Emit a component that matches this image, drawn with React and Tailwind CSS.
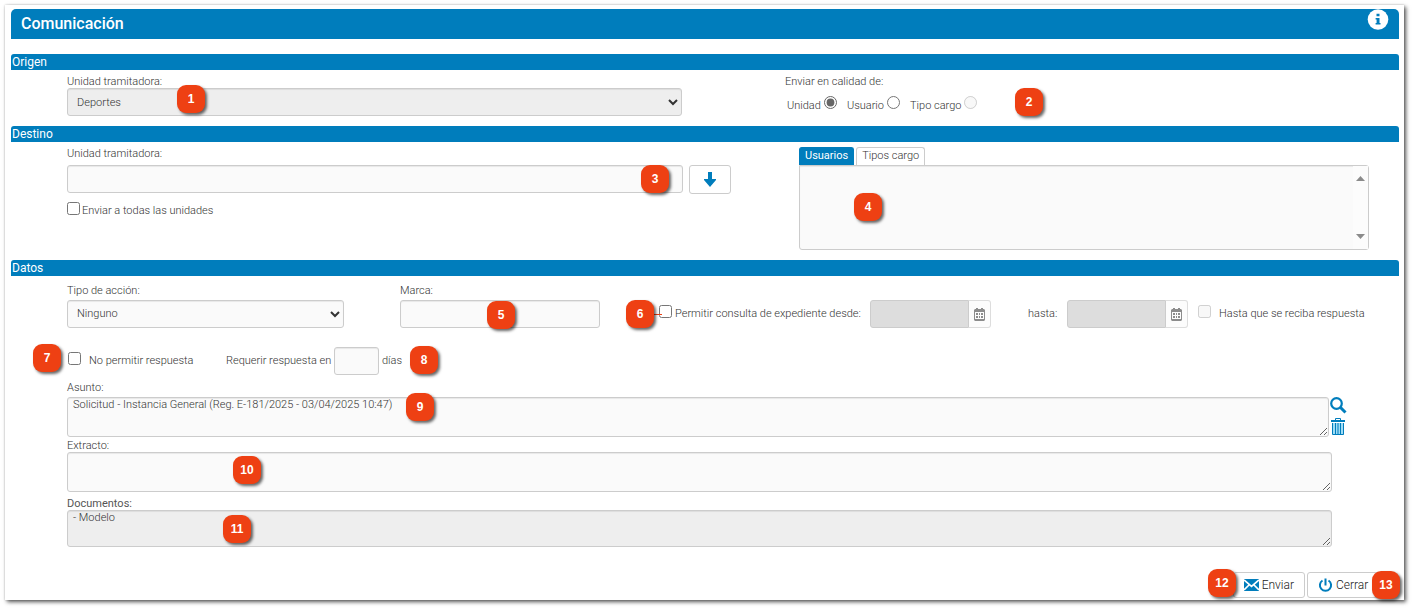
import React, { useState } from 'react';

const fieldBase = 'block h-7 rounded-[3px] border border-[#ccc] shadow-[inset_0_1px_1px_rgba(0,0,0,0.075)] focus:outline-none focus:border-[#007dbc]';
const areaBase = 'block w-full resize rounded-[3px] border border-[#ccc] px-[5px] py-0 leading-[14px] shadow-[inset_0_1px_1px_rgba(0,0,0,0.075)] focus:outline-none focus:border-[#007dbc]';

function Badge({ number, className }) {
  return (
    <span
      className={`absolute z-10 flex h-7 w-7 items-center justify-center rounded-[9px] bg-[#ee4013] font-['Liberation_Sans',sans-serif] text-[12px] font-bold text-white shadow-[2px_2px_3px_rgba(0,0,0,0.6)] ${className}`}
    >
      {number}
    </span>
  );
}

function SectionTitle({ children }) {
  return (
    <h2 className="h-4 rounded-t-[3px] bg-[#007dbc] px-px text-[12px] leading-4 font-normal text-white">
      {children}
    </h2>
  );
}

function CalendarIcon() {
  return (
    <svg width="11" height="13" viewBox="0 0 11 13" fill="#8c8c8c">
      <path d="M2 0h2v1h3V0h2v1h1l1 1v10l-1 1H1l-1-1V2l1-1h1zM1 4v7h9V4z" fillRule="evenodd" />
      <path d="M2 5h2v2H2zM5 5h1v2H5zM7 5h2v2H7zM2 8h2v2H2zM5 8h1v2H5zM7 8h2v2H7z" />
    </svg>
  );
}

function DateField({ id, label }) {
  return (
    <div className="flex">
      <input
        id={id}
        type="text"
        disabled
        aria-label={label}
        className="h-7 w-[99px] rounded-l-[3px] border border-[#ccc] bg-[#ddd]"
      />
      <button
        type="button"
        disabled
        aria-label="Abrir calendario"
        className="flex h-7 w-[22px] items-center justify-center rounded-r-[3px] border border-l-0 border-[#ddd] bg-[#fcfcfc]"
      >
        <CalendarIcon />
      </button>
    </div>
  );
}

function App() {
  const [calidad, setCalidad] = useState('unidad');
  const [tab, setTab] = useState('usuarios');
  const [asunto, setAsunto] = useState('Solicitud - Instancia General (Reg. E-181/2025 - 03/04/2025 10:47)');

  return (
    <div className="bg-white pt-[5px] pr-[9px] pb-[10px] pl-[5px] font-[Roboto,sans-serif] text-[11px] leading-[14px] font-light text-[#333]">
      <form
        onSubmit={(e) => e.preventDefault()}
        className="bg-white pt-1 pr-[5px] pb-[2px] pl-[6px] shadow-[2px_2px_4px_rgba(0,0,0,0.65),0_0_2px_rgba(0,0,0,0.2)]"
      >
        <header className="flex h-[30px] items-start justify-between rounded-t-[5px] bg-[#007dbc] px-[10px]">
          <h1 className="text-base leading-[30px] font-medium text-white">Comunicación</h1>
          <button type="button" aria-label="Información" className="block">
            <svg width="22" height="22" viewBox="0 0 22 22">
              <circle cx="11" cy="10.500" r="10.300" fill="#fff" />
              <path d="M9.500 4.700h3v2.600h-3zM8.600 9h3.900v5h1v1.600H8.600V14h1v-3.400h-1z" fill="#007dbc" />
            </svg>
          </button>
        </header>

        {/* Origen */}
        <section className="mt-[15px]">
          <SectionTitle>Origen</SectionTitle>
          <div className="grid h-14 grid-cols-[718fr_614fr] pt-[5px] pl-14">
            <div className="relative pr-[103px]">
              <label htmlFor="origen" className="-mb-px block">Unidad tramitadora:</label>
              <select id="origen" disabled className={`${fieldBase} w-full bg-[#eee] px-[5px] opacity-100`}>
                <option>Deportes</option>
              </select>
              <Badge number={1} className="top-[10px] left-[110px]" />
            </div>
            <div role="radiogroup" aria-labelledby="calidad" className="relative">
              <div id="calidad">Enviar en calidad de:</div>
              <div className="flex gap-[10px] pt-[7px] pl-[2px]">
                <label className="flex items-end gap-[3px]">
                  Unidad
                  <input
                    type="radio"
                    name="calidad"
                    checked={calidad === 'unidad'}
                    onChange={() => setCalidad('unidad')}
                    className="mb-1 h-[13px] w-[13px] accent-[#666]"
                  />
                </label>
                <label className="flex items-end gap-[3px]">
                  Usuario
                  <input
                    type="radio"
                    name="calidad"
                    checked={calidad === 'usuario'}
                    onChange={() => setCalidad('usuario')}
                    className="mb-1 h-[13px] w-[13px] accent-[#666]"
                  />
                </label>
                <label className="flex items-end gap-[3px]">
                  Tipo cargo
                  <input type="radio" name="calidad" disabled className="mb-1 h-[13px] w-[13px]" />
                </label>
              </div>
              <Badge number={2} className="top-[13px] left-[230px]" />
            </div>
          </div>
        </section>

        {/* Destino */}
        <section>
          <SectionTitle>Destino</SectionTitle>
          <div className="grid h-[118px] grid-cols-[732fr_600fr] pt-[5px] pl-14">
            <div className="pr-[68px]">
              <label htmlFor="destino" className="block">Unidad tramitadora:</label>
              <div className="flex gap-[6px] pt-1">
                <div className="relative flex-1">
                  <input id="destino" type="text" className={`${fieldBase} w-full bg-[#fafafa] px-2`} />
                  <Badge number={3} className="top-0 right-[14px]" />
                </div>
                <button
                  type="button"
                  aria-label="Añadir unidad"
                  className="flex h-[29px] w-[42px] items-center justify-center rounded-[3px] border border-[#ccc] bg-white"
                >
                  <svg width="12" height="15" viewBox="0 0 12 15" fill="#007dbc">
                    <path d="M4 0h4v7h4v1L6 15 0 8V7h4z" />
                  </svg>
                </button>
              </div>
              <label className="flex items-end gap-[2px] pt-2">
                <input type="checkbox" className="mb-[3px] h-[13px] w-[13px]" />
                Enviar a todas las unidades
              </label>
            </div>

            <div className="flex flex-col pr-[30px]">
              <div role="tablist" className="flex gap-[2px]">
                <button
                  type="button"
                  role="tab"
                  aria-selected={tab === 'usuarios'}
                  onClick={() => setTab('usuarios')}
                  className={`h-[18px] rounded-t-[3px] border border-b-0 px-[5px] pb-px leading-4 ${tab === 'usuarios' ? 'border-[#007dbc] bg-[#007dbc] font-normal text-white' : 'border-[#ccc] bg-white'}`}
                >
                  Usuarios
                </button>
                <button
                  type="button"
                  role="tab"
                  aria-selected={tab === 'cargos'}
                  onClick={() => setTab('cargos')}
                  className={`h-[18px] rounded-t-[3px] border border-b-0 px-[5px] pb-px leading-4 ${tab === 'cargos' ? 'border-[#007dbc] bg-[#007dbc] font-normal text-white' : 'border-[#ccc] bg-white'}`}
                >
                  Tipos cargo
                </button>
              </div>
              <div role="tabpanel" className="relative flex h-[85px] justify-end rounded-b-[3px] rounded-tr-[3px] border border-[#ccc] bg-[#fafafa] shadow-[inset_0_1px_1px_rgba(0,0,0,0.075)]">
                <div className="flex w-[15px] flex-col items-center justify-between bg-[#fcfcfc] py-[10px]">
                  <svg width="9" height="5" viewBox="0 0 9 5" fill="#8b8b8b"><path d="M4.500 0L9 5H0z" /></svg>
                  <svg width="9" height="5" viewBox="0 0 9 5" fill="#8b8b8b"><path d="M0 0h9L4.500 5z" /></svg>
                </div>
                <Badge number={4} className="top-[27px] left-[54px]" />
              </div>
            </div>
          </div>
        </section>

        {/* Datos */}
        <section>
          <SectionTitle>Datos</SectionTitle>
          <div className="flex pt-2 pl-14">
            <div className="mr-14 w-[277px]">
              <label htmlFor="accion" className="mb-[2px] block">Tipo de acción:</label>
              <select id="accion" className={`${fieldBase} w-full bg-[#fafafa] px-[5px] pb-px`}>
                <option>Ninguno</option>
              </select>
            </div>
            <div className="relative mr-[59px] w-[200px]">
              <label htmlFor="marca" className="mb-[2px] block">Marca:</label>
              <input id="marca" type="text" className={`${fieldBase} w-full bg-[#fafafa] px-2`} />
              <Badge number={5} className="top-[17px] left-[87px]" />
            </div>
            <div className="flex flex-1 items-center pt-4">
              <div className="relative flex w-[211px] items-center">
                <input id="permitir" type="checkbox" className="mb-[6px] h-[13px] w-[13px]" />
                <label htmlFor="permitir" className="pl-[3px] whitespace-nowrap">Permitir consulta de expediente desde:</label>
                <span className="absolute top-[9px] left-[-5px] z-10 h-px w-2 bg-[#ee4013]" />
                <Badge number={6} className="top-[-5px] left-[-33px]" />
              </div>
              <DateField id="desde" label="desde" />
              <label htmlFor="hasta" className="mr-[10px] ml-[37px] w-[29px]">hasta:</label>
              <DateField id="hasta" label="hasta" />
              <input id="reciba" type="checkbox" disabled className="mb-[6px] ml-[10px] h-[13px] w-[13px]" />
              <label htmlFor="reciba" className="pl-2 whitespace-nowrap">Hasta que se reciba respuesta</label>
            </div>
          </div>

          <div className="relative flex items-center pt-[19px] pl-[57px]">
            <Badge number={7} className="top-4 left-[22px]" />
            <input id="nopermitir" type="checkbox" className="mb-[6px] h-[13px] w-[13px]" />
            <label htmlFor="nopermitir" className="w-[145px] pl-2">No permitir respuesta</label>
            <label htmlFor="dias" className="w-[108px] whitespace-nowrap">Requerir respuesta en</label>
            <input id="dias" type="text" className={`${fieldBase} w-[45px] bg-[#fafafa] px-2`} />
            <span className="pl-[3px]">días</span>
            <Badge number={8} className="top-[18px] left-[399px]" />
          </div>

          <div className="pt-[6px] pr-[52px] pl-14">
            <label htmlFor="asunto" className="mb-[2px] block">Asunto:</label>
            <div className="flex gap-[1px]">
              <div className="relative flex-1">
                <textarea
                  id="asunto"
                  value={asunto}
                  onChange={(e) => setAsunto(e.target.value)}
                  className={`${areaBase} h-10 bg-[#fafafa]`}
                />
                <Badge number={9} className="top-[-4px] left-[339px]" />
              </div>
              <div className="flex w-[17px] flex-col gap-1">
                <button type="button" aria-label="Buscar asunto">
                  <svg width="17" height="17" viewBox="0 0 17 17" fill="none" stroke="#007dbc">
                    <circle cx="6.500" cy="6.500" r="5.300" strokeWidth="2.200" />
                    <path d="M10.500 10.500L15.500 15.500" strokeWidth="3" />
                  </svg>
                </button>
                <button type="button" aria-label="Borrar asunto">
                  <svg width="17" height="18" viewBox="0 0 17 18" fill="none" stroke="#007dbc">
                    <path d="M3 5h11v11.500H3z" fill="#9fdcf5" stroke="none" />
                    <path d="M1 3h14" strokeWidth="2" />
                    <path d="M5.500 2V0.500h5V2M2.500 5v11.500h11V5M5.500 5v11M8 5v11M10.500 5v11" />
                  </svg>
                </button>
              </div>
            </div>
          </div>

          <div className="pt-[2px] pr-[67px] pl-14">
            <label htmlFor="extracto" className="-mb-px block">Extracto:</label>
            <div className="relative">
              <textarea id="extracto" className={`${areaBase} h-10 bg-[#fafafa]`} />
              <Badge number={10} className="top-1 left-[166px]" />
            </div>
            <label htmlFor="documentos" className="mt-[5px] -mb-px block font-normal text-[#555]">Documentos:</label>
            <div className="relative">
              <textarea id="documentos" readOnly value="- Modelo" className={`${areaBase} h-[37px] bg-[#eee]`} />
              <Badge number={11} className="top-[5px] left-[156px]" />
            </div>
          </div>
        </section>

        <footer className="mt-[25px] flex justify-end gap-[2px] pr-[6px] text-[12px]">
          <div className="relative">
            <button type="submit" className="flex h-[26px] w-[72px] items-center justify-end gap-[3px] rounded-[3px] border border-[#ccc] bg-white pr-[10px] text-[#222]">
              <svg width="15" height="12" viewBox="0 0 15 12">
                <path d="M0 0h15v12H0z" fill="#007dbc" />
                <path d="M0 1l7.500 6.500L15 1M0 11l5-5M15 11l-5-5" fill="none" stroke="#fff" strokeWidth="1.700" />
              </svg>
              Enviar
            </button>
            <Badge number={12} className="top-[-3px] left-[-25px]" />
          </div>
          <div className="relative">
            <button type="button" className="flex h-[26px] w-[86px] items-center gap-[3px] rounded-[3px] border border-[#ccc] bg-white pl-[10px] text-[#222]">
              <svg width="15" height="15" viewBox="0 0 15 15" fill="none" stroke="#007dbc" strokeWidth="2">
                <path d="M4.500 2.500a5.600 5.600 0 1 0 6 0M7.500 0.500v7" />
              </svg>
              Cerrar
            </button>
            <Badge number={13} className="top-[-1px] left-[65px]" />
          </div>
        </footer>
      </form>
    </div>
  );
}

export default App;
